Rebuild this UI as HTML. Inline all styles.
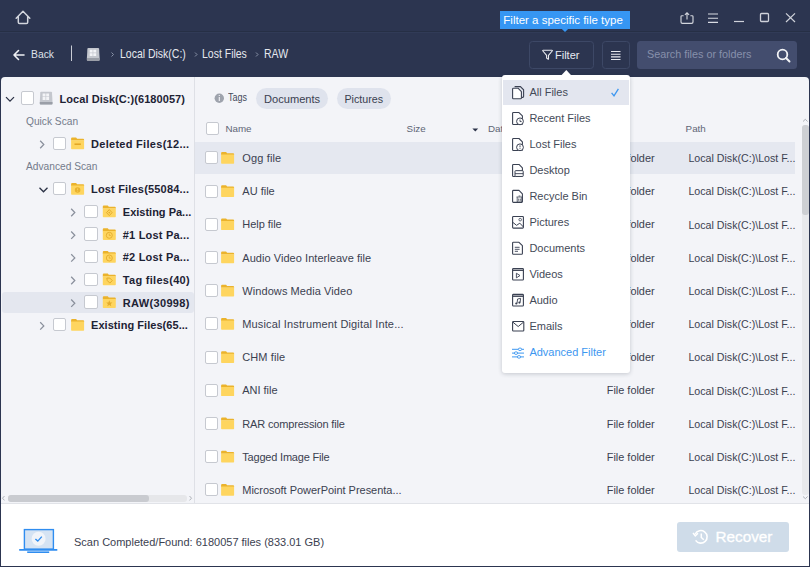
<!DOCTYPE html>
<html><head><meta charset="utf-8">
<style>
*{margin:0;padding:0;box-sizing:border-box}
html,body{width:810px;height:567px;overflow:hidden}
body{background:#2c3550;font-family:"Liberation Sans",sans-serif;position:relative}
.a{position:absolute}
.t{position:absolute;white-space:nowrap;line-height:1}
svg{position:absolute;overflow:visible;left:0;top:0}
.cb{position:absolute;width:13px;height:13px;background:#fff;border:1px solid #c6c9d0;border-radius:2px}
.tb{font-weight:bold;font-size:11px;color:#1d2234}
.rt{font-size:11px;color:#3b4150}
.mi{font-size:11px;color:#3d4352}
</style></head><body>


<div class="a" style="left:0;top:31px;width:810px;height:1px;background:#262f45"></div><div class="a" style="left:0;top:32px;width:810px;height:1px;background:#313b57"></div>
<svg width="810" height="77">
  <path d="M16.2 18.2 L23 11.3 L29.8 18.2 M18.3 16.6 V22.3 Q18.3 23.6 19.6 23.6 H26.4 Q27.7 23.6 27.7 22.3 V16.6" fill="none" stroke="#d3d6de" stroke-width="1.5" stroke-linejoin="round" stroke-linecap="round"/>
  <path d="M683.6 15.7 H681.9 Q681 15.7 681 16.6 V22 Q681 23.4 682.4 23.4 H691.6 Q693 23.4 693 22 V16.6 Q693 15.7 692.1 15.7 H690.4" fill="none" stroke="#d3d6dd" stroke-width="1.15"/>
  <path d="M687 19.6 V12.8 M684.9 14.9 L687 12.8 L689.1 14.9" fill="none" stroke="#d3d6dd" stroke-width="1.1"/>
  <path d="M708 14 H718 M708 18.2 H718 M708 22.4 H718" stroke="#d8dbe2" stroke-width="1.15"/>
  <path d="M734 21.5 H744" stroke="#cfd2da" stroke-width="1.2"/>
  <rect x="760.5" y="13.5" width="8" height="8" rx="1" fill="none" stroke="#cfd2da" stroke-width="1.3"/>
  <path d="M786 13.4 L795 22 M795 13.4 L786 22" stroke="#cfd2da" stroke-width="1.2"/>
  <path d="M14 55 H24 M18.5 50.5 L14 55 L18.5 59.5" fill="none" stroke="#eef0f4" stroke-width="1.6" stroke-linecap="round" stroke-linejoin="round"/>
  <path d="M71.5 45.5 V61" stroke="#c9ccd4" stroke-width="1"/>
  <g transform="translate(86.9 47.9)"><path d="M1.4 0 H11.3 Q12.1 0 12.2 0.8 L12.7 10 V12 Q12.7 12.8 11.9 12.8 H0.8 Q0 12.8 0 12 V10 L0.5 0.8 Q0.6 0 1.4 0 Z" fill="#c4c7ce"/><path d="M0 10.2 H12.7 V12 Q12.7 12.8 11.9 12.8 H0.8 Q0 12.8 0 12 Z" fill="#9a9ea7"/><path d="M2.8 1.9 h2.9 v2.8 h-2.9z M6.4 1.9 h2.9 v2.8 h-2.9z M2.8 5.4 h2.9 v2.8 h-2.9z M6.4 5.4 h2.9 v2.8 h-2.9z" fill="#f3f4f7"/></g>
  <path d="M111.5 52.5 L113.5 54.5 L111.5 56.5 M195 52.5 L197 54.5 L195 56.5 M256 52.5 L258 54.5 L256 56.5" fill="none" stroke="#8a93a8" stroke-width="1"/>
  <rect x="529.5" y="41.5" width="64" height="27" rx="3" fill="none" stroke="#3d4866" stroke-width="1"/>
  <path d="M543.2 50.3 H551.9 Q552.7 50.3 552.2 51 L548.5 55.4 V58.9 Q548.5 59.4 548 59.1 L546.6 58 V55.4 L542.9 51 Q542.4 50.3 543.2 50.3 Z" fill="none" stroke="#e8eaef" stroke-width="1.1" stroke-linejoin="round"/>
  <rect x="602.5" y="41.5" width="27" height="27" rx="3" fill="none" stroke="#3d4866" stroke-width="1"/>
  <path d="M611 51.5 H620.5 M611 54.2 H620.5 M611 56.9 H620.5 M611 59.5 H620.5" stroke="#e6e8ee" stroke-width="1.1"/>
  <rect x="637" y="41" width="160" height="28" rx="3.5" fill="#434d6e"/>
  <circle cx="782.5" cy="54.5" r="4.8" fill="none" stroke="#f2f3f6" stroke-width="1.8"/>
  <path d="M786 58 L789.5 61.5" stroke="#f2f3f6" stroke-width="1.9" stroke-linecap="round"/>
</svg>
<div class="t" style="left:31px;top:48.3px;font-size:11.7px;color:#dfe2e9;transform:scaleX(0.885);transform-origin:0 0">Back</div>
<div class="t" style="left:120px;top:48.17px;font-size:12.2px;color:#e6e8ee;transform:scaleX(0.86);transform-origin:0 0">Local Disk(C:)</div>
<div class="t" style="left:202px;top:48.17px;font-size:12.2px;color:#e6e8ee;transform:scaleX(0.86);transform-origin:0 0">Lost Files</div>
<div class="t" style="left:263.5px;top:48.17px;font-size:12.2px;color:#e6e8ee;transform:scaleX(0.86);transform-origin:0 0">RAW</div>
<div class="t" style="left:555px;top:49.79px;font-size:11px;color:#e8eaf0">Filter</div>
<div class="t" style="left:647px;top:49.36px;font-size:10.8px;color:#8790ab">Search files or folders</div>
<div class="a" style="left:1px;top:77px;width:808px;height:489px;background:#f3f4f8;border-radius:4px 4px 0 0"></div>
<div class="a" style="left:194px;top:77px;width:1px;height:426px;background:#dee0e6"></div>
<div class="a" style="left:1px;top:503px;width:808px;height:1px;background:#e1e3e8"></div>
<div class="a" style="left:1px;top:504px;width:808px;height:62px;background:#fff"></div>
<div class="a" style="left:2px;top:292.4px;width:191.6px;height:20.6px;background:#e4e7ef;border-radius:3px"></div>
<div class="cb" style="left:21px;top:91.4px;width:13.2px;height:13.2px"></div>
<div class="t tb" style="left:59.5px;top:93.59px;letter-spacing:0.06px">Local Disk(C:)(6180057)</div>
<div class="cb" style="left:52.7px;top:136.7px;width:13.2px;height:13.2px"></div>
<div class="t tb" style="left:91px;top:138.89px;letter-spacing:0.29px">Deleted Files(12...</div>
<div class="cb" style="left:52.7px;top:182.1px;width:13.2px;height:13.2px"></div>
<div class="t tb" style="left:91px;top:184.29px;letter-spacing:0.18px">Lost Files(55084...</div>
<div class="cb" style="left:84.4px;top:204.7px;width:13.2px;height:13.2px"></div>
<div class="t tb" style="left:122.8px;top:206.89px;letter-spacing:0px">Existing Pa...</div>
<div class="cb" style="left:84.4px;top:227.4px;width:13.2px;height:13.2px"></div>
<div class="t tb" style="left:122.8px;top:229.59px;letter-spacing:0.2px">#1 Lost Pa...</div>
<div class="cb" style="left:84.4px;top:250.1px;width:13.2px;height:13.2px"></div>
<div class="t tb" style="left:122.8px;top:252.29px;letter-spacing:0.2px">#2 Lost Pa...</div>
<div class="cb" style="left:84.4px;top:272.7px;width:13.2px;height:13.2px"></div>
<div class="t tb" style="left:122.8px;top:274.89px;letter-spacing:0.29px">Tag files(40)</div>
<div class="cb" style="left:84.4px;top:295.4px;width:13.2px;height:13.2px"></div>
<div class="t tb" style="left:122.8px;top:297.59px;letter-spacing:0.34px">RAW(30998)</div>
<div class="cb" style="left:52.7px;top:318.1px;width:13.2px;height:13.2px"></div>
<div class="t tb" style="left:91px;top:320.29px;letter-spacing:0.05px">Existing Files(65...</div>
<svg width="810" height="567"><path d="M6 97.1 L10 101.1 L14 97.1" fill="none" stroke="#2a3145" stroke-width="1.3"/><g transform="translate(39.8 91.7)"><path d="M1.4 0 H11.3 Q12.1 0 12.2 0.8 L12.7 10 V12 Q12.7 12.8 11.9 12.8 H0.8 Q0 12.8 0 12 V10 L0.5 0.8 Q0.6 0 1.4 0 Z" fill="#c4c7ce"/><path d="M0 10.2 H12.7 V12 Q12.7 12.8 11.9 12.8 H0.8 Q0 12.8 0 12 Z" fill="#9a9ea7"/><path d="M2.8 1.9 h2.9 v2.8 h-2.9z M6.4 1.9 h2.9 v2.8 h-2.9z M2.8 5.4 h2.9 v2.8 h-2.9z M6.4 5.4 h2.9 v2.8 h-2.9z" fill="#f3f4f7"/></g><path d="M40.2 140.8 L43.8 144.5 L40.2 148.20000000000002" fill="none" stroke="#8a909c" stroke-width="1.25"/><g transform="translate(71.1 137.6)"><path d="M0 1 Q0 0 1 0 H5 L6 1.2 H12 Q13 1.2 13 2.2 V3 H0 Z" fill="#ebb32c"/><path d="M0 2.6 H13 V11 Q13 11.7 12.3 11.7 H0.7 Q0 11.7 0 11 Z" fill="#fed55f"/></g><path d="M74.5 144.2 H80.89999999999999" stroke="#e2a523" stroke-width="1.5"/><path d="M39.5 187.79999999999998 L43.5 191.79999999999998 L47.5 187.79999999999998" fill="none" stroke="#2a3145" stroke-width="1.3"/><g transform="translate(71.1 183.0)"><path d="M0 1 Q0 0 1 0 H5 L6 1.2 H12 Q13 1.2 13 2.2 V3 H0 Z" fill="#ebb32c"/><path d="M0 2.6 H13 V11 Q13 11.7 12.3 11.7 H0.7 Q0 11.7 0 11 Z" fill="#fed55f"/></g><circle cx="77.6" cy="190.0" r="2.8" fill="#e8b22f"/><path d="M77.6 188.4 V190.4 M77.6 191.2 V191.8" stroke="#fed55f" stroke-width="0.8"/><path d="M71.2 208.8 L74.8 212.5 L71.2 216.20000000000002" fill="none" stroke="#8a909c" stroke-width="1.25"/><g transform="translate(102.8 205.6)"><path d="M0 1 Q0 0 1 0 H5 L6 1.2 H12 Q13 1.2 13 2.2 V3 H0 Z" fill="#ebb32c"/><path d="M0 2.6 H13 V11 Q13 11.7 12.3 11.7 H0.7 Q0 11.7 0 11 Z" fill="#fed55f"/></g><path d="M109.3 209.6 L112.1 212.6 L109.3 215.6 L106.5 212.6 Z" fill="none" stroke="#e3ac2c" stroke-width="1"/><circle cx="109.3" cy="212.6" r="0.9" fill="#e3ac2c"/><path d="M71.2 231.5 L74.8 235.2 L71.2 238.9" fill="none" stroke="#8a909c" stroke-width="1.25"/><g transform="translate(102.8 228.3)"><path d="M0 1 Q0 0 1 0 H5 L6 1.2 H12 Q13 1.2 13 2.2 V3 H0 Z" fill="#ebb32c"/><path d="M0 2.6 H13 V11 Q13 11.7 12.3 11.7 H0.7 Q0 11.7 0 11 Z" fill="#fed55f"/></g><circle cx="109.3" cy="235.3" r="3" fill="none" stroke="#e3ac2c" stroke-width="0.9"/><path d="M109.3 233.60000000000002 V235.5 H110.8" fill="none" stroke="#e3ac2c" stroke-width="0.8"/><path d="M71.2 254.2 L74.8 257.9 L71.2 261.59999999999997" fill="none" stroke="#8a909c" stroke-width="1.25"/><g transform="translate(102.8 251.0)"><path d="M0 1 Q0 0 1 0 H5 L6 1.2 H12 Q13 1.2 13 2.2 V3 H0 Z" fill="#ebb32c"/><path d="M0 2.6 H13 V11 Q13 11.7 12.3 11.7 H0.7 Q0 11.7 0 11 Z" fill="#fed55f"/></g><circle cx="109.3" cy="258.0" r="3" fill="none" stroke="#e3ac2c" stroke-width="0.9"/><path d="M109.3 256.3 V258.2 H110.8" fill="none" stroke="#e3ac2c" stroke-width="0.8"/><path d="M71.2 276.8 L74.8 280.5 L71.2 284.2" fill="none" stroke="#8a909c" stroke-width="1.25"/><g transform="translate(102.8 273.6)"><path d="M0 1 Q0 0 1 0 H5 L6 1.2 H12 Q13 1.2 13 2.2 V3 H0 Z" fill="#ebb32c"/><path d="M0 2.6 H13 V11 Q13 11.7 12.3 11.7 H0.7 Q0 11.7 0 11 Z" fill="#fed55f"/></g><path d="M106.8 278.1 H109.8 L112.3 280.6 L109.8 283.1 L107.3 280.6 Z" fill="none" stroke="#e3ac2c" stroke-width="1"/><path d="M71.2 299.5 L74.8 303.2 L71.2 306.9" fill="none" stroke="#8a909c" stroke-width="1.25"/><g transform="translate(102.8 296.3)"><path d="M0 1 Q0 0 1 0 H5 L6 1.2 H12 Q13 1.2 13 2.2 V3 H0 Z" fill="#ebb32c"/><path d="M0 2.6 H13 V11 Q13 11.7 12.3 11.7 H0.7 Q0 11.7 0 11 Z" fill="#fed55f"/></g><path d="M109.3 300.3 L110.2 302.5 L112.39999999999999 302.6 L110.7 304.0 L111.3 306.2 L109.3 304.90000000000003 L107.3 306.2 L107.89999999999999 304.0 L106.2 302.6 L108.39999999999999 302.5 Z" fill="#e3ac2c"/><path d="M40.2 322.2 L43.8 325.9 L40.2 329.59999999999997" fill="none" stroke="#8a909c" stroke-width="1.25"/><g transform="translate(71.1 319.0)"><path d="M0 1 Q0 0 1 0 H5 L6 1.2 H12 Q13 1.2 13 2.2 V3 H0 Z" fill="#ebb32c"/><path d="M0 2.6 H13 V11 Q13 11.7 12.3 11.7 H0.7 Q0 11.7 0 11 Z" fill="#fed55f"/></g></svg>
<div class="t" style="left:26px;top:116.57px;font-size:10.2px;color:#747b8b">Quick Scan</div>
<div class="t" style="left:26px;top:162.37px;font-size:10.2px;color:#747b8b">Advanced Scan</div>
<div class="a" style="left:8px;top:495px;width:179px;height:6.5px;background:#e6e7ea;border-radius:3px"></div>
<div class="a" style="left:8px;top:495px;width:141px;height:6.5px;background:#c9cbd0;border-radius:3px"></div>
<svg width="810" height="567"><path d="M4.5 496 L2.5 498.2 L4.5 500.4 M189.5 496 L191.5 498.2 L189.5 500.4" fill="none" stroke="#a4a8af" stroke-width="0.9"/></svg>
<div class="a" style="left:195px;top:142px;width:600px;height:31.6px;background:#e5e8f0"></div>
<svg width="810" height="567">
<circle cx="219.3" cy="98.2" r="4.7" fill="#9ea3ad"/>
<path d="M219.3 96.9 V101 M219.3 95 V95.9" stroke="#f3f4f8" stroke-width="1.1"/>
<path d="M472.4 128.6 H478.2 L475.3 131.6 Z" fill="#2b3248"/>
</svg>
<div class="t" style="left:228px;top:92.83px;font-size:10px;color:#444a5a;transform:scaleX(0.9);transform-origin:0 0">Tags</div>
<div class="a" style="left:256px;top:88px;width:72px;height:21.4px;background:#dfe3ed;border-radius:11px"></div>
<div class="a" style="left:337px;top:88px;width:54px;height:21.4px;background:#dfe3ed;border-radius:11px"></div>
<div class="t" style="left:264px;top:93.9px;font-size:11.1px;color:#3a4050">Documents</div>
<div class="t" style="left:344.4px;top:94.24px;font-size:10.7px;color:#3a4050">Pictures</div>
<div class="cb" style="left:205.6px;top:121.8px;width:13px;height:13px"></div>
<div class="t" style="left:225.4px;top:123.5px;font-size:9.8px;color:#5e6575">Name</div>
<div class="t" style="left:406.6px;top:123.5px;font-size:9.8px;color:#5e6575">Size</div>
<div class="t" style="left:488px;top:123.5px;font-size:9.8px;color:#5e6575">Date</div>
<div class="t" style="left:685.6px;top:123.5px;font-size:9.8px;color:#5e6575">Path</div>
<div class="cb" style="left:205.2px;top:151.4px;width:13px;height:13px"></div>
<div class="t rt" style="left:242.3px;top:153.09px;letter-spacing:0.14px">Ogg file</div>
<div class="t rt" style="left:606.8px;top:153.07px;font-size:10.9px">File folder</div>
<div class="t rt" style="left:688.4px;top:153.28px;font-size:10.65px">Local Disk(C:)\Lost F...</div>
<div class="cb" style="left:205.2px;top:184.6px;width:13px;height:13px"></div>
<div class="t rt" style="left:242.3px;top:186.29px;letter-spacing:0px">AU file</div>
<div class="t rt" style="left:606.8px;top:186.27px;font-size:10.9px">File folder</div>
<div class="t rt" style="left:688.4px;top:186.48px;font-size:10.65px">Local Disk(C:)\Lost F...</div>
<div class="cb" style="left:205.2px;top:217.8px;width:13px;height:13px"></div>
<div class="t rt" style="left:242.3px;top:219.49px;letter-spacing:-0.05px">Help file</div>
<div class="t rt" style="left:606.8px;top:219.47px;font-size:10.9px">File folder</div>
<div class="t rt" style="left:688.4px;top:219.68px;font-size:10.65px">Local Disk(C:)\Lost F...</div>
<div class="cb" style="left:205.2px;top:251.0px;width:13px;height:13px"></div>
<div class="t rt" style="left:242.3px;top:252.69px;letter-spacing:0.046px">Audio Video Interleave file</div>
<div class="t rt" style="left:606.8px;top:252.67px;font-size:10.9px">File folder</div>
<div class="t rt" style="left:688.4px;top:252.88px;font-size:10.65px">Local Disk(C:)\Lost F...</div>
<div class="cb" style="left:205.2px;top:284.2px;width:13px;height:13px"></div>
<div class="t rt" style="left:242.3px;top:285.89px;letter-spacing:0.078px">Windows Media Video</div>
<div class="t rt" style="left:606.8px;top:285.87px;font-size:10.9px">File folder</div>
<div class="t rt" style="left:688.4px;top:286.08px;font-size:10.65px">Local Disk(C:)\Lost F...</div>
<div class="cb" style="left:205.2px;top:317.4px;width:13px;height:13px"></div>
<div class="t rt" style="left:242.3px;top:319.09px;letter-spacing:0.145px">Musical Instrument Digital Inte...</div>
<div class="t rt" style="left:606.8px;top:319.07px;font-size:10.9px">File folder</div>
<div class="t rt" style="left:688.4px;top:319.28px;font-size:10.65px">Local Disk(C:)\Lost F...</div>
<div class="cb" style="left:205.2px;top:350.6px;width:13px;height:13px"></div>
<div class="t rt" style="left:242.3px;top:352.29px;letter-spacing:0.086px">CHM file</div>
<div class="t rt" style="left:606.8px;top:352.27px;font-size:10.9px">File folder</div>
<div class="t rt" style="left:688.4px;top:352.48px;font-size:10.65px">Local Disk(C:)\Lost F...</div>
<div class="cb" style="left:205.2px;top:383.8px;width:13px;height:13px"></div>
<div class="t rt" style="left:242.3px;top:385.49px;letter-spacing:-0.03px">ANI file</div>
<div class="t rt" style="left:606.8px;top:385.47px;font-size:10.9px">File folder</div>
<div class="t rt" style="left:688.4px;top:385.68px;font-size:10.65px">Local Disk(C:)\Lost F...</div>
<div class="cb" style="left:205.2px;top:417.0px;width:13px;height:13px"></div>
<div class="t rt" style="left:242.3px;top:418.69px;letter-spacing:-0.168px">RAR compression file</div>
<div class="t rt" style="left:606.8px;top:418.67px;font-size:10.9px">File folder</div>
<div class="t rt" style="left:688.4px;top:418.88px;font-size:10.65px">Local Disk(C:)\Lost F...</div>
<div class="cb" style="left:205.2px;top:450.2px;width:13px;height:13px"></div>
<div class="t rt" style="left:242.3px;top:451.89px;letter-spacing:-0.2px">Tagged Image File</div>
<div class="t rt" style="left:606.8px;top:451.87px;font-size:10.9px">File folder</div>
<div class="t rt" style="left:688.4px;top:452.08px;font-size:10.65px">Local Disk(C:)\Lost F...</div>
<div class="cb" style="left:205.2px;top:483.4px;width:13px;height:13px"></div>
<div class="t rt" style="left:242.3px;top:485.09px;letter-spacing:-0.032px">Microsoft PowerPoint Presenta...</div>
<div class="t rt" style="left:606.8px;top:485.07px;font-size:10.9px">File folder</div>
<div class="t rt" style="left:688.4px;top:485.28px;font-size:10.65px">Local Disk(C:)\Lost F...</div>
<svg width="810" height="567"><g transform="translate(221.1 152.0)"><path d="M0 1 Q0 0 1 0 H5 L6 1.2 H12 Q13 1.2 13 2.2 V3 H0 Z" fill="#ebb32c"/><path d="M0 2.6 H13 V11 Q13 11.7 12.3 11.7 H0.7 Q0 11.7 0 11 Z" fill="#fed55f"/></g><g transform="translate(221.1 185.2)"><path d="M0 1 Q0 0 1 0 H5 L6 1.2 H12 Q13 1.2 13 2.2 V3 H0 Z" fill="#ebb32c"/><path d="M0 2.6 H13 V11 Q13 11.7 12.3 11.7 H0.7 Q0 11.7 0 11 Z" fill="#fed55f"/></g><g transform="translate(221.1 218.4)"><path d="M0 1 Q0 0 1 0 H5 L6 1.2 H12 Q13 1.2 13 2.2 V3 H0 Z" fill="#ebb32c"/><path d="M0 2.6 H13 V11 Q13 11.7 12.3 11.7 H0.7 Q0 11.7 0 11 Z" fill="#fed55f"/></g><g transform="translate(221.1 251.6)"><path d="M0 1 Q0 0 1 0 H5 L6 1.2 H12 Q13 1.2 13 2.2 V3 H0 Z" fill="#ebb32c"/><path d="M0 2.6 H13 V11 Q13 11.7 12.3 11.7 H0.7 Q0 11.7 0 11 Z" fill="#fed55f"/></g><g transform="translate(221.1 284.8)"><path d="M0 1 Q0 0 1 0 H5 L6 1.2 H12 Q13 1.2 13 2.2 V3 H0 Z" fill="#ebb32c"/><path d="M0 2.6 H13 V11 Q13 11.7 12.3 11.7 H0.7 Q0 11.7 0 11 Z" fill="#fed55f"/></g><g transform="translate(221.1 318.0)"><path d="M0 1 Q0 0 1 0 H5 L6 1.2 H12 Q13 1.2 13 2.2 V3 H0 Z" fill="#ebb32c"/><path d="M0 2.6 H13 V11 Q13 11.7 12.3 11.7 H0.7 Q0 11.7 0 11 Z" fill="#fed55f"/></g><g transform="translate(221.1 351.2)"><path d="M0 1 Q0 0 1 0 H5 L6 1.2 H12 Q13 1.2 13 2.2 V3 H0 Z" fill="#ebb32c"/><path d="M0 2.6 H13 V11 Q13 11.7 12.3 11.7 H0.7 Q0 11.7 0 11 Z" fill="#fed55f"/></g><g transform="translate(221.1 384.4)"><path d="M0 1 Q0 0 1 0 H5 L6 1.2 H12 Q13 1.2 13 2.2 V3 H0 Z" fill="#ebb32c"/><path d="M0 2.6 H13 V11 Q13 11.7 12.3 11.7 H0.7 Q0 11.7 0 11 Z" fill="#fed55f"/></g><g transform="translate(221.1 417.6)"><path d="M0 1 Q0 0 1 0 H5 L6 1.2 H12 Q13 1.2 13 2.2 V3 H0 Z" fill="#ebb32c"/><path d="M0 2.6 H13 V11 Q13 11.7 12.3 11.7 H0.7 Q0 11.7 0 11 Z" fill="#fed55f"/></g><g transform="translate(221.1 450.8)"><path d="M0 1 Q0 0 1 0 H5 L6 1.2 H12 Q13 1.2 13 2.2 V3 H0 Z" fill="#ebb32c"/><path d="M0 2.6 H13 V11 Q13 11.7 12.3 11.7 H0.7 Q0 11.7 0 11 Z" fill="#fed55f"/></g><g transform="translate(221.1 484.0)"><path d="M0 1 Q0 0 1 0 H5 L6 1.2 H12 Q13 1.2 13 2.2 V3 H0 Z" fill="#ebb32c"/><path d="M0 2.6 H13 V11 Q13 11.7 12.3 11.7 H0.7 Q0 11.7 0 11 Z" fill="#fed55f"/></g></svg>
<div class="a" style="left:802.2px;top:125px;width:6.4px;height:370px;background:#e8e9ec;border-radius:3px"></div>
<div class="a" style="left:802.2px;top:125px;width:6.4px;height:90px;background:#cdcfd3;border-radius:3px"></div>
<svg width="810" height="567"><path d="M803 121.5 L805.3 119.3 L807.6 121.5 M803 496.5 L805.3 498.7 L807.6 496.5" fill="none" stroke="#a4a8af" stroke-width="0.9"/></svg>
<svg width="810" height="567">
<rect x="24.4" y="529.6" width="29" height="19.5" fill="#d5e3f3" stroke="#2f8df0" stroke-width="1.4"/>
<path d="M19.2 549.9 H57.3" stroke="#2f8df0" stroke-width="1.6"/>
<path d="M27.2 552.2 H49.2" stroke="#2f8df0" stroke-width="1.6"/>
<circle cx="38.6" cy="538.8" r="7" fill="#f1f4f9"/>
<path d="M35.4 538.9 L37.8 541.1 L41.8 536.6" fill="none" stroke="#2f8df0" stroke-width="1.4"/>
</svg>
<div class="t" style="left:74px;top:536.79px;font-size:11px;color:#3b4150">Scan Completed/Found: 6180057 files (833.01 GB)</div>
<div class="a" style="left:677px;top:521.5px;width:111.5px;height:30.8px;background:#cfdce9;border-radius:3px"></div>
<svg width="810" height="567">
<path d="M695.2 534 A6.3 6.3 0 1 1 695.6 540.4" fill="none" stroke="#fff" stroke-width="1.6"/>
<path d="M693 533 L695.3 535.8 L698 533.2" fill="none" stroke="#fff" stroke-width="1.5"/>
<path d="M701.3 533.5 V537.5 L703.8 539.8" fill="none" stroke="#fff" stroke-width="1.5"/>
</svg>
<div class="t" style="left:715.5px;top:529.25px;font-size:15.3px;color:#fff;-webkit-text-stroke:0.3px #fff">Recover</div>
<div class="a" style="left:499.6px;top:11px;width:130.1px;height:17.8px;background:#3696f3"></div>
<svg width="810" height="567"><path d="M561.6 28.7 L565 31.9 L568.4 28.7 Z" fill="#3696f3"/></svg>
<div class="t" style="left:503.3px;top:15.17px;font-size:11.5px;color:#fff">Filter a specific file type</div>
<div class="a" style="left:502.2px;top:75px;width:128px;height:298px;background:#fff;border-radius:3px;box-shadow:0 1px 4px rgba(30,40,60,0.22)"></div>
<svg width="810" height="567"><path d="M561.2 75.6 L566.3 70.1 L571.4 75.6 Z" fill="#fff"/></svg>
<div class="a" style="left:503px;top:80px;width:126px;height:25px;background:#e3e6ef"></div>
<div class="t mi" style="left:529.4px;top:86.99px;color:#444a58">All Files</div>
<div class="t mi" style="left:529.4px;top:112.94px;color:#444a58">Recent Files</div>
<div class="t mi" style="left:529.4px;top:138.89px;color:#444a58">Lost Files</div>
<div class="t mi" style="left:529.4px;top:164.84px;color:#444a58">Desktop</div>
<div class="t mi" style="left:529.4px;top:190.79px;color:#444a58">Recycle Bin</div>
<div class="t mi" style="left:529.4px;top:216.74px;color:#444a58">Pictures</div>
<div class="t mi" style="left:529.4px;top:242.69px;color:#444a58">Documents</div>
<div class="t mi" style="left:529.4px;top:268.64px;color:#444a58">Videos</div>
<div class="t mi" style="left:529.4px;top:294.59px;color:#444a58">Audio</div>
<div class="t mi" style="left:529.4px;top:320.54px;color:#444a58">Emails</div>
<div class="t mi" style="left:529.4px;top:347.29px;color:#3d97f0">Advanced Filter</div>
<svg width="810" height="567"><path d="M514.6 86.6 H520.4 L523.6 89.8 V96.6 Q523.6 97.4 522.8 97.4 H521.4" fill="none" stroke="#3a4152" stroke-width="1.1"/><path d="M512.6 89.0 Q512.6 88.19999999999999 513.4 88.19999999999999 H518.0 L521.4 91.6 V98.0 Q521.4 98.8 520.6 98.8 H513.4 Q512.6 98.8 512.6 98.0 Z" fill="#fff" stroke="#3a4152" stroke-width="1.1" stroke-linejoin="round"/><path d="M512.6 113.35000000000001 Q512.6 112.55 513.4 112.55 H519.0 L522.4 115.95 V123.75 Q522.4 124.55 521.6 124.55 H513.4 Q512.6 124.55 512.6 123.75 Z" fill="#fff" stroke="#3a4152" stroke-width="1.1" stroke-linejoin="round"/><circle cx="520" cy="121.35000000000001" r="3.4" fill="#fff" stroke="#3a4152" stroke-width="1"/><path d="M520 119.55 V121.55 H521.6" fill="none" stroke="#3a4152" stroke-width="0.9"/><path d="M512.6 139.29999999999998 Q512.6 138.49999999999997 513.4 138.49999999999997 H519.0 L522.4 141.89999999999998 V149.69999999999996 Q522.4 150.49999999999997 521.6 150.49999999999997 H513.4 Q512.6 150.49999999999997 512.6 149.69999999999996 Z" fill="#fff" stroke="#3a4152" stroke-width="1.1" stroke-linejoin="round"/><circle cx="520" cy="147.29999999999998" r="3.4" fill="#fff" stroke="#3a4152" stroke-width="1"/><path d="M520 145.29999999999998 V147.29999999999998 M520 148.2 V149.09999999999997" fill="none" stroke="#3a4152" stroke-width="0.9"/><path d="M512.6 165.24999999999997 Q512.6 164.44999999999996 513.4 164.44999999999996 H519.0 L522.4 167.84999999999997 V175.64999999999995 Q522.4 176.44999999999996 521.6 176.44999999999996 H513.4 Q512.6 176.44999999999996 512.6 175.64999999999995 Z" fill="#fff" stroke="#3a4152" stroke-width="1.1" stroke-linejoin="round"/><rect x="515" y="170.64999999999998" width="8.2" height="5.8" rx="0.6" fill="#fff" stroke="#3a4152" stroke-width="1"/><path d="M515 173.64999999999998 H523.2" stroke="#3a4152" stroke-width="0.9"/><path d="M512.6 191.2 Q512.6 190.39999999999998 513.4 190.39999999999998 H519.0 L522.4 193.79999999999998 V201.59999999999997 Q522.4 202.39999999999998 521.6 202.39999999999998 H513.4 Q512.6 202.39999999999998 512.6 201.59999999999997 Z" fill="#fff" stroke="#3a4152" stroke-width="1.1" stroke-linejoin="round"/><path d="M516.5 196.99999999999997 H522.5 M517.2 197.2 V202.1 H521.8 V197.2 M518.7 198.6 V200.79999999999998 M520.3 198.6 V200.79999999999998 M518.6 195.99999999999997 H520.4" fill="none" stroke="#3a4152" stroke-width="0.8"/><rect x="512.6" y="216.55" width="10.8" height="11.6" rx="0.8" fill="none" stroke="#3a4152" stroke-width="1.1"/><path d="M512.8 222.35 L516.6 225.35 L519.8 223.15 L523.4 226.95" fill="none" stroke="#3a4152" stroke-width="1"/><circle cx="520.2" cy="219.65" r="1.3" fill="none" stroke="#3a4152" stroke-width="0.8"/><path d="M512.6 243.1 Q512.6 242.29999999999998 513.4 242.29999999999998 H519.0 L522.4 245.7 V253.49999999999997 Q522.4 254.29999999999998 521.6 254.29999999999998 H513.4 Q512.6 254.29999999999998 512.6 253.49999999999997 Z" fill="#fff" stroke="#3a4152" stroke-width="1.1" stroke-linejoin="round"/><path d="M514.8 247.29999999999998 H519.6 M514.8 249.29999999999998 H519.6 M514.8 251.29999999999998 H518" stroke="#3a4152" stroke-width="0.9"/><rect x="512.6" y="268.45" width="10.8" height="11.6" rx="0.8" fill="none" stroke="#3a4152" stroke-width="1.1"/><path d="M512.6 270.25 H523.4" stroke="#3a4152" stroke-width="1.4"/><path d="M516.4 273.25 L520 275.54999999999995 L516.4 277.84999999999997 Z" fill="none" stroke="#3a4152" stroke-width="0.9"/><rect x="512.6" y="294.4" width="10.8" height="11.6" rx="0.8" fill="none" stroke="#3a4152" stroke-width="1.1"/><path d="M512.6 296.2 H523.4" stroke="#3a4152" stroke-width="1.4"/><path d="M517 303.4 L517.6 298.99999999999994 L520.6 298.4 L520.1 302.4" fill="none" stroke="#3a4152" stroke-width="0.9"/><circle cx="516.3" cy="303.49999999999994" r="1.1" fill="#3a4152"/><circle cx="519.4" cy="302.59999999999997" r="1.1" fill="#3a4152"/><rect x="512.6" y="321.44999999999993" width="11.2" height="9.6" rx="0.8" fill="none" stroke="#3a4152" stroke-width="1.1"/><path d="M512.9 322.15 L518.2 326.54999999999995 L523.5 322.15" fill="none" stroke="#3a4152" stroke-width="1"/><path d="M512 349.3 H524 M512 353.1 H524 M512 356.90000000000003 H524" stroke="#3d97f0" stroke-width="1"/><ellipse cx="520" cy="349.3" rx="1.7" ry="1.3" fill="#fff" stroke="#3d97f0" stroke-width="0.9"/><ellipse cx="516" cy="353.1" rx="1.7" ry="1.3" fill="#fff" stroke="#3d97f0" stroke-width="0.9"/><ellipse cx="519" cy="356.90000000000003" rx="1.7" ry="1.3" fill="#fff" stroke="#3d97f0" stroke-width="0.9"/><path d="M611.6 92.8 L614 95.8 L618.4 88.8" fill="none" stroke="#3d97f0" stroke-width="1.3"/></svg>
</body></html>
